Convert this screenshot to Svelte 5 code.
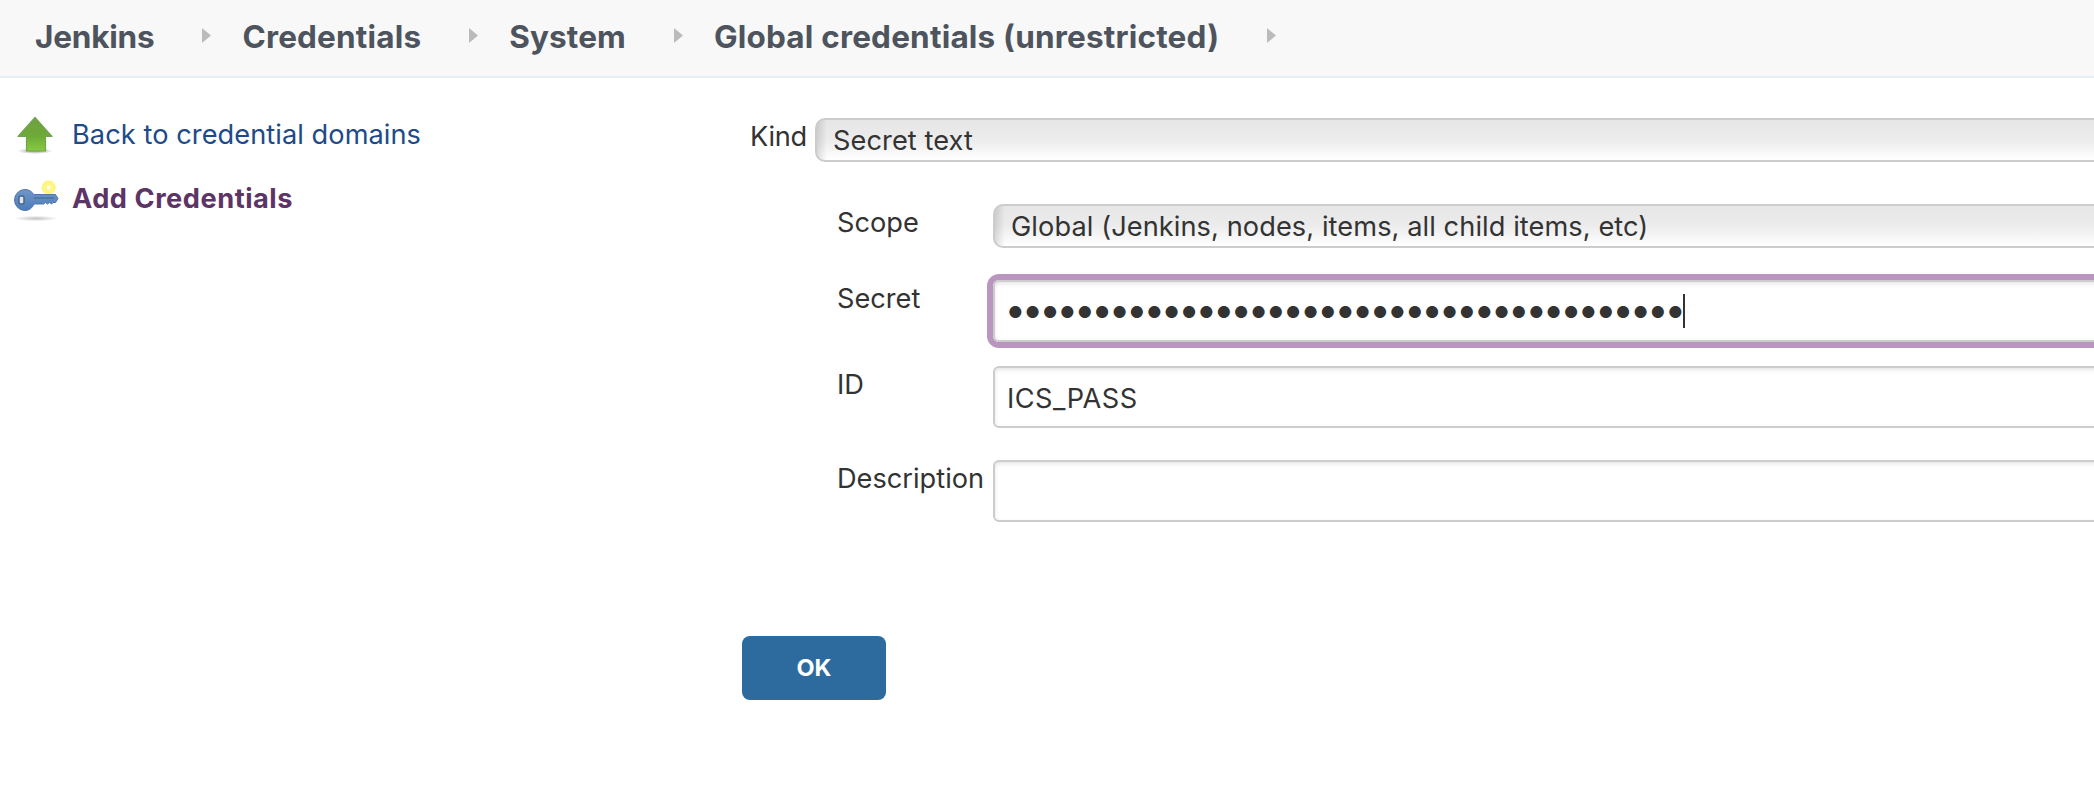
<script>
  const crumbs = [
    { text: 'Jenkins', spacing: -0.2 },
    { text: 'Credentials', spacing: 0.17 },
    { text: 'System', spacing: 0.12 },
    { text: 'Global credentials (unrestricted)', spacing: 0.19 }
  ];
  const secret = '•'.repeat(39);
</script>

<header class="crumbs">
  {#each crumbs as crumb}
    <a class="crumb" href="#top" style="letter-spacing: {crumb.spacing}px">{crumb.text}</a>
    <svg class="sep" viewBox="0 0 9 15" width="9" height="15"><path d="M0 0 9 7.500 0 15Z" fill="#bbb" /></svg>
  {/each}
</header>

<div class="page">
  <nav class="side">
    <a class="task" href="#back">
      <svg width="48" height="48" viewBox="0 0 48 48">
        <defs>
          <linearGradient id="up" x1="0" y1="0" x2="0" y2="1">
            <stop offset="0" stop-color="#6f9f45" /><stop offset=".55" stop-color="#6daa38" /><stop offset="1" stop-color="#86cb40" />
          </linearGradient>
          <radialGradient id="shade"><stop offset="0" stop-color="#000" stop-opacity=".4" /><stop offset="1" stop-color="#000" stop-opacity="0" /></radialGradient>
        </defs>
        <ellipse cx="24" cy="41" rx="18" ry="3" fill="url(#shade)" />
        <path d="M24 7.500 41 26.500H34.500V41H15.500V26.500H7Z" fill="url(#up)" stroke="#73a34c" stroke-width="1.200" stroke-linejoin="round" />
      </svg>
      <span>Back to credential domains</span>
    </a>
    <a class="task active" href="#add">
      <svg width="48" height="48" viewBox="0 0 48 48">
        <defs>
          <linearGradient id="key" x1="0" y1="0" x2="0" y2="1"><stop offset="0" stop-color="#6f96c8" /><stop offset="1" stop-color="#4d7cba" /></linearGradient>
        </defs>
        <ellipse cx="25" cy="44.500" rx="22" ry="2.800" fill="url(#shade)" opacity=".6" />
        <circle cx="37.700" cy="13.500" r="4.700" fill="#fffde0" stroke="#fdf684" stroke-width="5" />
        <path d="M14 15.500C18 15.500 21 17.500 22.700 20.500H44.500L47 24.500 44.500 28.500H42L40.500 30 38.500 28.500 36.500 30 34.500 28.500 32.500 30H23C21.400 34 18 36.500 14 36.500A10.500 10.500 0 0 1 14 15.500Z" fill="url(#key)" stroke="#5077ab" stroke-width="1" />
        <path d="M23 24H43" stroke="#416ba5" stroke-width="1.200" />
        <rect x="8" y="22" width="5" height="8" rx="1.500" fill="#e3e5e3" stroke="#45658f" stroke-width="1.500" />
      </svg>
      <span>Add Credentials</span>
    </a>
  </nav>

  <main class="form">
    <div class="row kind">
      <span class="label">Kind</span>
      <div class="select">Secret text</div>
    </div>
    <div class="row scope">
      <span class="label">Scope</span>
      <div class="select">Global (Jenkins, nodes, items, all child items, etc)</div>
    </div>
    <div class="row secret">
      <span class="label">Secret</span>
      <div class="input focus"><span class="dots">{secret}</span><span class="caret"></span></div>
    </div>
    <div class="row id">
      <span class="label">ID</span>
      <div class="input value">ICS_PASS</div>
    </div>
    <div class="row desc">
      <span class="label">Description</span>
      <div class="input"></div>
    </div>
    <button class="ok">OK</button>
  </main>
</div>

<style>
  :global(body) { margin: 0; background: #fff; overflow: hidden; }
  :global(#app) { font-family: Inter, "Liberation Sans", sans-serif; font-size: 27.2px; color: #333; }
  a { text-decoration: none; color: inherit; }
  .crumbs { display: flex; align-items: center; box-sizing: border-box; height: 78px; padding: 0 0 2px 35px; background: #f8f8f8; border-bottom: 2px solid #e6eef2; }
  .crumb { font-size: 31.5px; font-weight: 700; line-height: 72px; color: #4d545d; white-space: nowrap; }
  .sep { margin: 0 31px 3px 48px; flex: none; }
  .page { display: flex; }
  .side { width: 731px; flex: none; padding: 32px 0 0 11px; display: flex; flex-direction: column; gap: 16px; }
  .task { display: flex; height: 48px; gap: 13px; line-height: 34px; color: #204a87; white-space: nowrap; letter-spacing: .06px; }
  .task span { padding-top: 8px; }
  .task svg { flex: none; }
  .active { color: #5c3566; font-weight: 700; letter-spacing: .53px; }
  .form { flex: 1; min-width: 0; padding-top: 40px; }
  .row { display: flex; margin-right: -24px; }
  .label { flex: none; box-sizing: border-box; width: 156px; padding-top: 2px; line-height: 34px; }
  .kind .label { width: 65px; letter-spacing: -.3px; }
  .kind { padding-left: 8px; }
  .scope, .secret, .id, .desc { padding-left: 95px; }
  .scope { margin-top: 42px; }
  .secret { margin-top: 32px; }
  .id { margin-top: 24px; }
  .desc { margin-top: 32px; }
  .select { flex: 1; box-sizing: border-box; height: 44px; border: 2px solid #ccc; border-radius: 10px; padding: 1px 0 0 16px; line-height: 40px; letter-spacing: .08px; background: linear-gradient(90deg, rgba(0,0,0,.12), rgba(0,0,0,0) 10px), linear-gradient(#e6e6e6, #ececec 50%, #fff); white-space: nowrap; }
  .input { flex: 1; display: flex; align-items: center; box-sizing: border-box; height: 62px; border: 2px solid #ccc; border-radius: 6px; padding: 2px 12px 0; box-shadow: inset 0 2px 4px rgba(0,0,0,.1); }
  .value { letter-spacing: .45px; }
  .focus { box-shadow: 0 0 0 6px #ba95bf, inset 0 2px 4px rgba(0,0,0,.1); padding: 0 10px; }
  .dots { font-size: 38.5px; letter-spacing: -4.29px; line-height: 52px; padding-bottom: 4px; margin-left: -.5px; white-space: nowrap; }
  .caret { width: 2px; height: 34px; background: #333; margin-left: 1px; }
  .ok { display: block; margin-top: 114px; width: 144px; height: 64px; padding: 0 0 2px; border: 0; border-radius: 8px; background: #2d6b9f; color: #fff; font: 700 23.500px Inter, sans-serif; }
</style>
